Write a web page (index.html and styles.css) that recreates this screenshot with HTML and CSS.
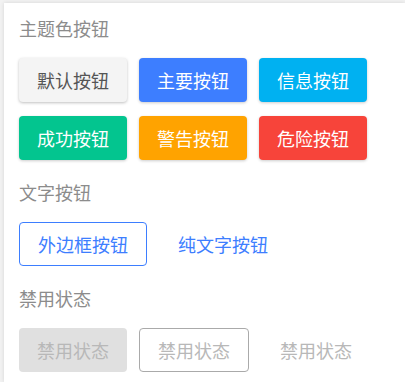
FILE: index.html
```html
<!DOCTYPE html>
<html>
<head>
    <title>按钮</title>
    <link rel="stylesheet" href="styles.css">
</head>
<body>
    <div class="card">
        <div class="section-title">主题色按钮</div>
        <div class="btn-group">
            <button class="btn btn-default">默认按钮</button>
            <button class="btn btn-primary">主要按钮</button>
            <button class="btn btn-info">信息按钮</button>
            <button class="btn btn-success">成功按钮</button>
            <button class="btn btn-warning">警告按钮</button>
            <button class="btn btn-danger">危险按钮</button>
        </div>

        <div class="section-title">文字按钮</div>
        <div class="btn-group">
            <button class="btn btn-outline">外边框按钮</button>
            <button class="btn btn-text">纯文字按钮</button>
        </div>

        <div class="section-title last">禁用状态</div>
        <div class="btn-group">
            <button class="btn btn-disabled" disabled>禁用状态</button>
            <button class="btn btn-outline-disabled" disabled>禁用状态</button>
            <button class="btn btn-text-disabled" disabled>禁用状态</button>
        </div>
    </div>
</body>
</html>
```

FILE: styles.css
```css
body { margin: 0; background: #f2f2f2; font-family: "Noto Sans CJK SC", "Noto Sans", sans-serif; }
.card { margin: 3px 0 0 4px; padding: 13px 0 0 15px; background: #fff; box-shadow: 0 0 4px rgba(0,0,0,0.12); height: calc(100vh - 3px); box-sizing: border-box; overflow: hidden; }
.section-title { font-size: 18px; line-height: 24px; color: #8c8c8c; margin: 0 0 18px; }
.section-title.last { margin-top: 1px; }
.btn-group { display: flex; flex-wrap: wrap; gap: 14px 12px; margin-bottom: 20px; }
.btn { box-sizing: border-box; height: 44px; padding: 0 18px; border: 0; border-radius: 4px; font-family: inherit; font-size: 18px; line-height: 24px; display: inline-flex; align-items: center; background: none; }
.btn-default { background: #f4f4f4; color: #555; box-shadow: 0 1px 3px rgba(0,0,0,0.25); }
.btn-primary { background: #3d7eff; color: #fff; box-shadow: 0 1px 3px rgba(0,0,0,0.2); }
.btn-info { background: #00b1f1; color: #fff; box-shadow: 0 1px 3px rgba(0,0,0,0.2); }
.btn-success { background: #03c58f; color: #fff; box-shadow: 0 1px 3px rgba(0,0,0,0.2); }
.btn-warning { background: #ffa300; color: #fff; box-shadow: 0 1px 3px rgba(0,0,0,0.2); }
.btn-danger { background: #f7443a; color: #fff; box-shadow: 0 1px 3px rgba(0,0,0,0.2); }
.btn-outline { border: 1px solid #3d7eff; color: #3d7eff; background: #fff; }
.btn-text { border: 1px solid transparent; color: #3d7eff; }
.btn-disabled { background: #e0e0e0; color: #b8b8b8; }
.btn-outline-disabled { border: 1px solid #aaa; color: #b8b8b8; background: #fff; }
.btn-text-disabled { border: 1px solid transparent; color: #b8b8b8; }
```
